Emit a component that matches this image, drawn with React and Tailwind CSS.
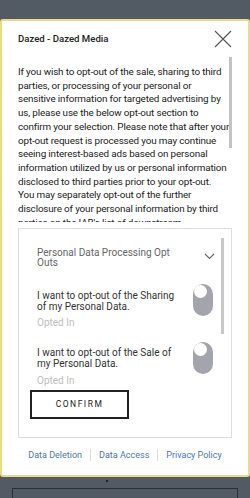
import React from "react";

const lines = [
  "If you wish to opt-out of the sale, sharing to third",
  "parties, or processing of your personal or",
  "sensitive information for targeted advertising by",
  "us, please use the below opt-out section to",
  "confirm your selection. Please note that after your",
  "opt-out request is processed you may continue",
  "seeing interest-based ads based on personal",
  "information utilized by us or personal information",
  "disclosed to third parties prior to your opt-out.",
  "You may separately opt-out of the further",
  "disclosure of your personal information by third",
  "parties on the IAB's list of downstream",
  "participants.",
];

function Toggle() {
  return (
    <div className="relative w-[20px] h-[32px] rounded-full bg-[#a4a4ac] shrink-0">
      <div className="absolute left-[1px] top-[1px] w-[13px] h-[13px] rounded-full bg-white" />
    </div>
  );
}

function OptRow({ label, top, textTop, optTop }) {
  return (
    <div className={`flex items-start justify-between pr-[18px] ${top}`}>
      <div className={`w-[140px] ${textTop}`}>
        <div className="text-[10px] leading-[10.5px] text-[#333]">{label}</div>
        <div className={`text-[10px] leading-[10px] text-[#bdbdbd] ${optTop}`}>Opted In</div>
      </div>
      <Toggle />
    </div>
  );
}

export default function App() {
  return (
    <div
      className="w-[250px] h-[498px] bg-[#525a63] flex flex-col overflow-hidden"
      style={{ fontFamily: "Roboto, 'Liberation Sans', sans-serif" }}
    >
      <div className="h-[19px] shrink-0" />

      {/* Modal */}
      <div className="h-[458px] shrink-0 bg-white border-2 border-[#ecd98f] rounded-[3px] flex flex-col px-4">
        <div className="flex items-center justify-between pt-[9px] h-[27px]">
          <span className="text-[9.6px] text-[#222] font-medium">Dazed - Dazed Media</span>
          <svg width="18" height="18" viewBox="0 0 18 18" fill="none" stroke="#555" strokeWidth="1.1">
            <path d="M1 1L17 17M17 1L1 17" />
          </svg>
        </div>

        {/* Description */}
        <div className="relative mt-[9px] h-[165px] overflow-hidden">
          <div className="pt-[8px] text-[9.9px] tracking-[-0.15px] leading-[13.7px] text-[#222] whitespace-nowrap">
            {lines.map((l) => (
              <div key={l}>{l}</div>
            ))}
          </div>
          <div className="absolute right-0 top-0 w-[3px] h-[91px] bg-[#c3c3c3]" />
        </div>

        {/* Opt-out box */}
        <div className="relative mt-[6px] h-[210px] border border-[#dedede] overflow-hidden">
          <div className="absolute right-[7px] top-[9px] w-[3px] h-[96px] bg-[#c8c8c8]" />
          <div className="pl-[18px]">
            <div className="flex items-start justify-between pr-[16px] pt-[19px]">
              <div className="w-[135px] text-[10px] leading-[10px] text-[#666]">
                Personal Data Processing Opt Outs
              </div>
              <svg width="11" height="7" viewBox="0 0 11 7" fill="none" stroke="#666" strokeWidth="1.1" className="mt-[5px]">
                <path d="M1 1L5.5 5.5L10 1" />
              </svg>
            </div>
            <OptRow
              label="I want to opt-out of the Sharing of my Personal Data."
              top="mt-[16px]"
              textTop="pt-[7px]"
              optTop="mt-[6px]"
            />
            <OptRow
              label="I want to opt-out of the Sale of my Personal Data."
              top="mt-[14px]"
              textTop="pt-[6px]"
              optTop="mt-[7px]"
            />
          </div>
          <button className="mt-[4px] ml-[11px] w-[99px] h-[29px] border-2 border-[#222] bg-white text-[8.5px] tracking-[1.5px] text-[#222] flex items-center justify-center">
            CONFIRM
          </button>
        </div>

        {/* Footer links */}
        <div className="mt-[11px] flex items-center justify-center whitespace-nowrap text-[9px] leading-[12px] text-[#4a78b0]">
          <span>Data Deletion</span>
          <span className="mx-[8px] w-px h-[12px] bg-[#dcdcdc] shrink-0" />
          <span>Data Access</span>
          <span className="mx-[8px] w-px h-[12px] bg-[#dcdcdc] shrink-0" />
          <span>Privacy Policy</span>
        </div>
      </div>

      {/* Page behind */}
      <div className="flex-1 relative">
        <div className="absolute left-[106px] top-[3px] w-[2px] h-[2px] rounded-full bg-[#111]" />
        <div className="mt-[11px] mx-[12px] h-[20px] border border-[#2a2f35]" />
      </div>
    </div>
  );
}
